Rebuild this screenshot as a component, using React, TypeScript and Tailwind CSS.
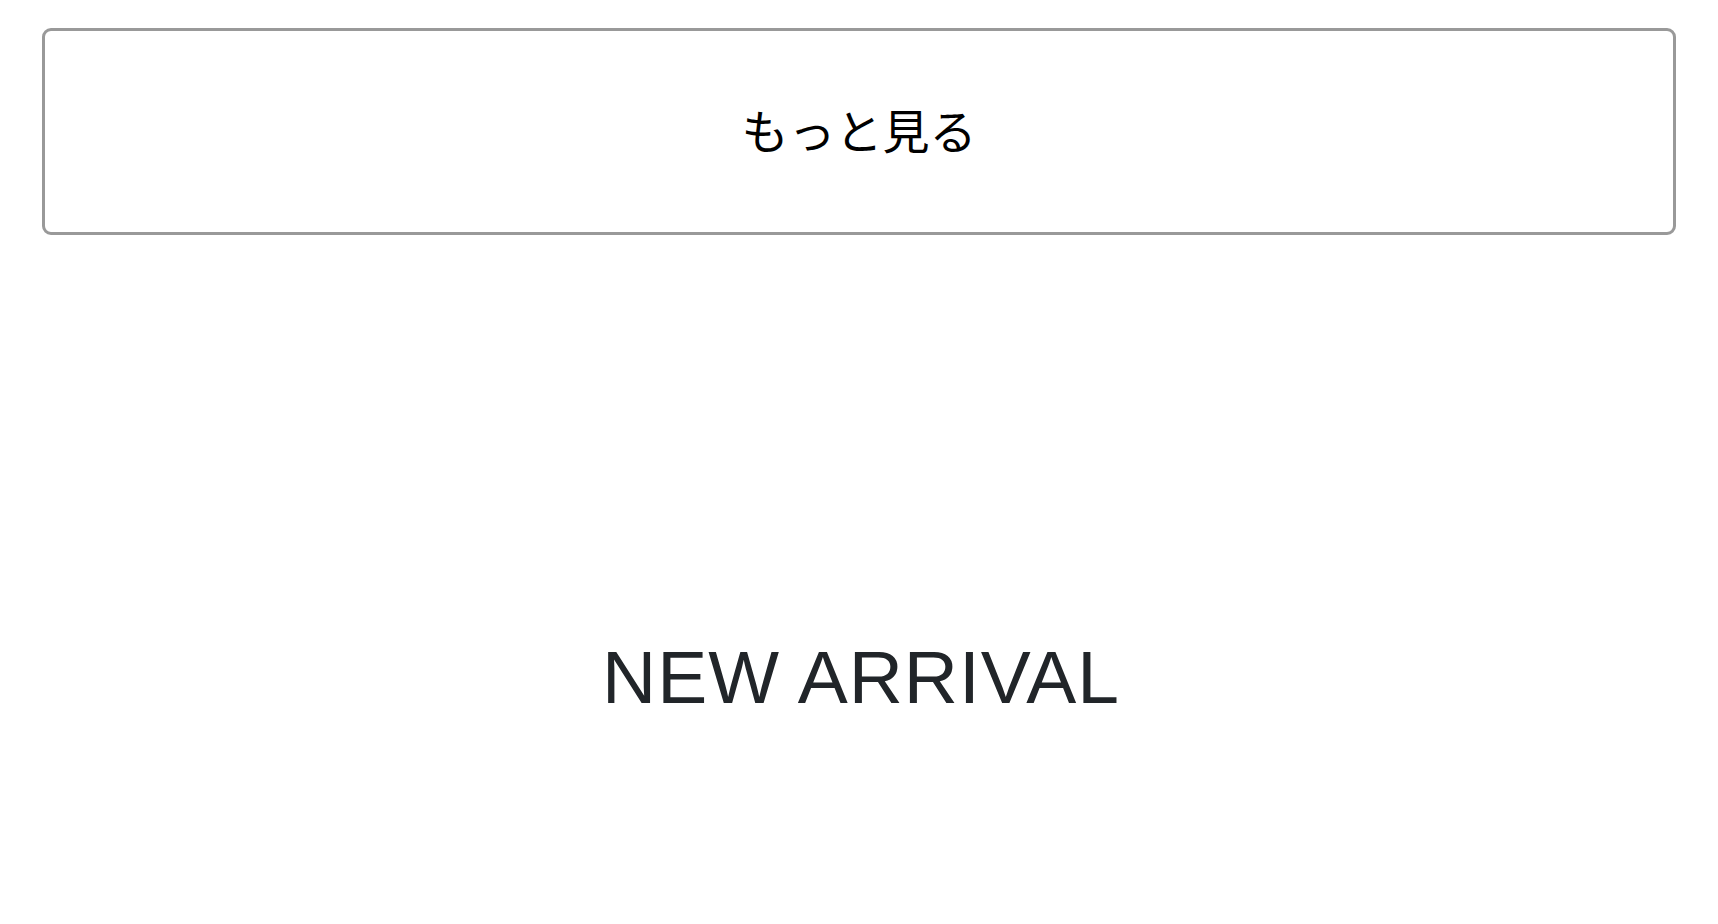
export default function App() {
  return (
    <div className="min-h-[924px] bg-white px-[42px] pt-[28px]">
      <button
        type="button"
        className="flex h-[207px] w-full items-center justify-center rounded-[9px] border-[3px] border-[#999999] bg-white text-[47px] text-black"
        style={{ fontFamily: '"Noto Sans CJK JP", "Noto Sans", sans-serif' }}
      >
        <span className="pb-[4px]">もっと見る</span>
      </button>

      <section className="mt-[397px]">
        <h2
          className="pl-[4px] text-center text-[75px] leading-[1.2] font-normal tracking-[1px] text-[#212529]"
          style={{ fontFamily: '"Liberation Sans", Arial, sans-serif' }}
        >
          NEW ARRIVAL
        </h2>
      </section>
    </div>
  );
}
